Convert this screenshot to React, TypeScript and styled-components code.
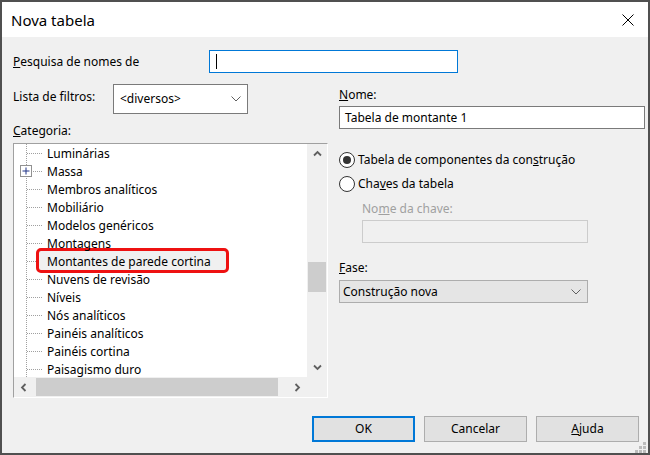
import React from "react";
import styled, { createGlobalStyle } from "styled-components";

const Global = createGlobalStyle`
  html, body { margin: 0; padding: 0; background: #f0f0f0; }
  body { width: 650px; height: 455px; overflow: hidden; }
  * { box-sizing: border-box; }
`;

const Win = styled.div`
  width: 650px;
  height: 455px;
  border: 2px solid #505050;
  display: flex;
  flex-direction: column;
  background: #f0f0f0;
  font-family: "Noto Sans", "Liberation Sans", sans-serif;
  font-size: 12px;
  line-height: 16px;
  color: #000;
`;

const TitleBar = styled.div`
  height: 35px;
  flex: none;
  background: #fff;
  display: flex;
  align-items: center;
  justify-content: space-between;
  padding: 0 14px 0 9px;
`;

const Title = styled.div`
  font-size: 15px;
  line-height: 20px;
`;

const Body = styled.div`
  flex: 1;
  position: relative;
  display: flex;
  flex-direction: column;
  padding: 13px 3px 0 11px;
`;

const SearchRow = styled.div`
  display: flex;
  align-items: center;
`;

const Label = styled.div<{ $w?: number; $mt?: number; $ml?: number; $pt?: number; $disabled?: boolean }>`
  flex: none;
  width: ${(p) => (p.$w ? `${p.$w}px` : "auto")};
  margin-top: ${(p) => p.$mt ?? 0}px;
  margin-left: ${(p) => p.$ml ?? 0}px;
  padding-top: ${(p) => p.$pt ?? 0}px;
  color: ${(p) => (p.$disabled ? "#a0a0a0" : "#000")};
  white-space: nowrap;
`;

const SearchInput = styled.div`
  width: 249px;
  height: 23px;
  border: 1px solid #0078d7;
  background: #fff;
  display: flex;
  align-items: center;
  padding-left: 6px;
`;

const Caret = styled.span`
  width: 1px;
  height: 15px;
  background: #000;
`;

const Main = styled.div`
  display: flex;
  gap: 11px;
  margin-top: 11px;
`;

const LeftCol = styled.div`
  width: 315px;
  display: flex;
  flex-direction: column;
`;

const RightCol = styled.div`
  width: 306px;
  display: flex;
  flex-direction: column;
`;

const FilterRow = styled.div`
  display: flex;
  height: 30px;
`;

const Combo = styled.div`
  width: 135px;
  height: 30px;
  border: 1px solid #7a7a7a;
  background: #fff;
  display: flex;
  align-items: center;
  justify-content: space-between;
  padding: 0 6px 0 6px;
`;

const Tree = styled.div`
  margin-top: 4px;
  width: 315px;
  height: 255px;
  border-top: 1px solid #a0a0a0;
  border-left: 1px solid #a0a0a0;
  border-bottom: 1px solid #fff;
  border-right: 1px solid #fff;
  display: grid;
  grid-template-columns: 293px 20px;
  grid-template-rows: 233px 20px;
`;

const TreeBody = styled.div`
  background: #fff;
  overflow: hidden;
`;

const TreeRow = styled.div`
  position: relative;
  display: flex;
  align-items: center;
  height: 18px;
  white-space: nowrap;
`;

const ItemText = styled.span`
  position: relative;
  z-index: 1;
  height: 18px;
  padding: 1px 2px 0 2px;
  line-height: 17px;
`;

const Annotation = styled.div`
  position: absolute;
  left: 22px;
  top: -4px;
  width: 193px;
  height: 25px;
  border: 3px solid #ee1111;
  border-radius: 5px;
  background: #f0f0f0;
  z-index: 0;
`;

const VScroll = styled.div`
  background: #f0f0f0;
  display: flex;
  flex-direction: column;
`;

const HScroll = styled.div`
  background: #f0f0f0;
  display: flex;
`;

const ArrowBtn = styled.div`
  flex: none;
  width: 20px;
  height: 20px;
  display: flex;
  align-items: center;
  justify-content: center;
`;

const Track = styled.div`
  flex: 1;
  display: flex;
`;

const VThumb = styled.div`
  margin: 98px 1px 0 1px;
  width: 18px;
  height: 30px;
  background: #cdcdcd;
`;

const HThumb = styled.div`
  margin: 1px 0 1px 2px;
  width: 242px;
  height: 18px;
  background: #cdcdcd;
`;

const Corner = styled.div`
  background: #f0f0f0;
`;

const NameInput = styled.div`
  margin-top: 3px;
  height: 23px;
  border: 1px solid #7a7a7a;
  background: #fff;
  display: flex;
  align-items: center;
  padding-left: 5px;
`;

const RadioList = styled.div`
  margin-top: 19px;
  display: flex;
  flex-direction: column;
`;

const RadioRow = styled.div`
  height: 24px;
  display: flex;
  align-items: center;
  gap: 3px;
`;

const RadioCircle = styled.span`
  width: 16px;
  height: 16px;
  border-radius: 50%;
  border: 1px solid #333;
  background: #fff;
  display: flex;
  align-items: center;
  justify-content: center;
`;

const RadioDot = styled.span`
  width: 8px;
  height: 8px;
  border-radius: 50%;
  background: #333;
`;

const DisabledInput = styled.div`
  margin: 3px 0 0 23px;
  width: 226px;
  height: 23px;
  border: 1px solid #cccccc;
  background: #f0f0f0;
`;

const FaseSelect = styled.div`
  margin-top: 4px;
  width: 249px;
  height: 23px;
  border: 1px solid #adadad;
  background: #e5e5e5;
  display: flex;
  align-items: center;
  justify-content: space-between;
  padding: 0 6px 0 3px;
`;

const Footer = styled.div`
  display: flex;
  justify-content: flex-end;
  gap: 9px;
  margin-top: 18px;
  margin-right: 6px;
`;

const Button = styled.button<{ $primary?: boolean }>`
  width: 103px;
  height: 26px;
  padding: 0;
  background: #e1e1e1;
  border: ${(p) => (p.$primary ? "2px solid #0078d7" : "1px solid #adadad")};
  font: inherit;
  color: #000;
`;

const Grip = styled.svg`
  position: absolute;
  right: 2px;
  bottom: 0px;
`;

const Chevron = ({ color = "#606060" }: { color?: string }) => (
  <svg width="10" height="6" viewBox="0 0 10 6">
    <polyline points="0.5,0.5 5,5 9.5,0.5" fill="none" stroke={color} strokeWidth="1" />
  </svg>
);

const ScrollArrow = ({ dir }: { dir: "up" | "down" | "left" | "right" }) => {
  const pts: Record<string, string> = {
    up: "1,5.5 4.5,2 8,5.5",
    down: "1,2.5 4.5,6 8,2.5",
    left: "5.5,1 2,4.5 5.5,8",
    right: "2.5,1 6,4.5 2.5,8",
  };
  return (
    <svg width="9" height="9" viewBox="0 0 9 9">
      <polyline points={pts[dir]} fill="none" stroke="#606060" strokeWidth="1.8" />
    </svg>
  );
};

const Connector = ({ expandable }: { expandable?: boolean }) => (
  <svg width="31" height="18" viewBox="0 0 31 18" style={{ flex: "none" }}>
    <line x1="12.5" y1="0" x2="12.5" y2="18" stroke="#a0a0a0" strokeDasharray="1 1" />
    <line x1="13" y1="9.5" x2="29" y2="9.5" stroke="#a0a0a0" strokeDasharray="1 1" />
    {expandable && (
      <g>
        <rect x="6.5" y="3.5" width="11" height="11" fill="#fff" stroke="#919191" />
        <line x1="8.5" y1="9" x2="15.5" y2="9" stroke="#1e3287" />
        <line x1="12" y1="5.5" x2="12" y2="12.5" stroke="#1e3287" />
      </g>
    )}
  </svg>
);

const items: { name: string; expandable?: boolean; marked?: boolean }[] = [
  { name: "Luminárias" },
  { name: "Massa", expandable: true },
  { name: "Membros analíticos" },
  { name: "Mobiliário" },
  { name: "Modelos genéricos" },
  { name: "Montagens" },
  { name: "Montantes de parede cortina", marked: true },
  { name: "Nuvens de revisão" },
  { name: "Níveis" },
  { name: "Nós analíticos" },
  { name: "Painéis analíticos" },
  { name: "Painéis cortina" },
  { name: "Paisagismo duro" },
];

export default function App() {
  return (
    <>
      <Global />
      <Win>
        <TitleBar>
          <Title>Nova tabela</Title>
          <svg width="12" height="12" viewBox="0 0 12 12">
            <line x1="0.5" y1="0.5" x2="11.5" y2="11.5" stroke="#000" strokeWidth="1" />
            <line x1="11.5" y1="0.5" x2="0.5" y2="11.5" stroke="#000" strokeWidth="1" />
          </svg>
        </TitleBar>
        <Body>
          <SearchRow>
            <Label $w={196}>
              <u>P</u>esquisa de nomes de
            </Label>
            <SearchInput>
              <Caret />
            </SearchInput>
          </SearchRow>
          <Main>
            <LeftCol>
              <FilterRow>
                <Label $w={100} $pt={5}>
                  Lista de filtros:
                </Label>
                <Combo>
                  <span>&lt;diversos&gt;</span>
                  <Chevron />
                </Combo>
              </FilterRow>
              <Label $mt={9}>
                <u>C</u>ategoria:
              </Label>
              <Tree>
                <TreeBody>
                  {items.map((it) => (
                    <TreeRow key={it.name}>
                      <Connector expandable={it.expandable} />
                      {it.marked && <Annotation />}
                      <ItemText>{it.name}</ItemText>
                    </TreeRow>
                  ))}
                </TreeBody>
                <VScroll>
                  <ArrowBtn>
                    <ScrollArrow dir="up" />
                  </ArrowBtn>
                  <Track>
                    <VThumb />
                  </Track>
                  <ArrowBtn>
                    <ScrollArrow dir="down" />
                  </ArrowBtn>
                </VScroll>
                <HScroll>
                  <ArrowBtn>
                    <ScrollArrow dir="left" />
                  </ArrowBtn>
                  <Track>
                    <HThumb />
                  </Track>
                  <ArrowBtn>
                    <ScrollArrow dir="right" />
                  </ArrowBtn>
                </HScroll>
                <Corner />
              </Tree>
            </LeftCol>
            <RightCol>
              <Label $mt={3}>
                <u>N</u>ome:
              </Label>
              <NameInput>Tabela de montante 1</NameInput>
              <RadioList>
                <RadioRow>
                  <RadioCircle>
                    <RadioDot />
                  </RadioCircle>
                  <span>
                    Tabela de componentes da con<u>s</u>trução
                  </span>
                </RadioRow>
                <RadioRow>
                  <RadioCircle />
                  <span>
                    Cha<u>v</u>es da tabela
                  </span>
                </RadioRow>
              </RadioList>
              <Label $mt={5} $ml={23} $disabled>
                No<u>m</u>e da chave:
              </Label>
              <DisabledInput />
              <Label $mt={17}>
                <u>F</u>ase:
              </Label>
              <FaseSelect>
                <span>Construção nova</span>
                <Chevron />
              </FaseSelect>
            </RightCol>
          </Main>
          <Footer>
            <Button $primary>OK</Button>
            <Button>Cancelar</Button>
            <Button>
              <u>A</u>juda
            </Button>
          </Footer>
          <Grip width="11" height="11" viewBox="0 0 11 11">
            <rect x="8" y="0" width="3" height="3" fill="#bcbcbc" />
            <rect x="4" y="4" width="3" height="3" fill="#bcbcbc" />
            <rect x="8" y="4" width="3" height="3" fill="#bcbcbc" />
            <rect x="0" y="8" width="3" height="3" fill="#bcbcbc" />
            <rect x="4" y="8" width="3" height="3" fill="#bcbcbc" />
            <rect x="8" y="8" width="3" height="3" fill="#bcbcbc" />
          </Grip>
        </Body>
      </Win>
    </>
  );
}
